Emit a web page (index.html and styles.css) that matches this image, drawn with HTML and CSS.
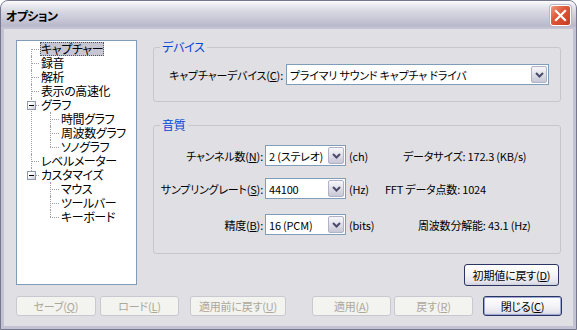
FILE: index.html
```html
<!DOCTYPE html>
<html lang="ja">
<head>
  <meta charset="UTF-8">
  <title>オプション</title>
  <link rel="stylesheet" href="styles.css">
</head>
<body>
  <div class="window">
    <div class="titlebar">
      <span class="title">オプション</span>
      <span class="close">
        <svg width="13" height="13" viewBox="0 0 13 13">
          <path d="M2 2 L11 11 M11 2 L2 11" stroke="#fff" stroke-width="2.2" stroke-linecap="square"/>
        </svg>
      </span>
    </div>

    <div class="client">
      <div class="main">
        <div class="tree">
          <ul class="root">
            <li><span class="node selected">キャプチャー</span></li>
            <li><span class="node">録音</span></li>
            <li><span class="node">解析</span></li>
            <li><span class="node">表示の高速化</span></li>
            <li>
              <span class="toggle"></span><span class="node">グラフ</span>
              <ul>
                <li><span class="node">時間グラフ</span></li>
                <li><span class="node">周波数グラフ</span></li>
                <li><span class="node">ソノグラフ</span></li>
              </ul>
            </li>
            <li><span class="node">レベルメーター</span></li>
            <li>
              <span class="toggle"></span><span class="node">カスタマイズ</span>
              <ul>
                <li><span class="node">マウス</span></li>
                <li><span class="node">ツールバー</span></li>
                <li><span class="node">キーボード</span></li>
              </ul>
            </li>
          </ul>
        </div>

        <div class="panel">
          <fieldset class="group device">
            <legend>デバイス</legend>
            <div class="device-row">
              <span class="caption">キャプチャーデバイス(<u>C</u>):</span>
              <div class="combo wide">
                <span class="value">プライマリ サウンド キャプチャ ドライバ</span>
                <span class="drop"><svg width="9" height="6" viewBox="0 0 9 6"><path d="M1 1 L4.5 4.5 L8 1" fill="none" stroke="#4a4c6a" stroke-width="2"/></svg></span>
              </div>
            </div>
          </fieldset>

          <fieldset class="group quality">
            <legend>音質</legend>
            <div class="qrow first">
              <span class="caption">チャンネル数(<u>N</u>):</span>
              <div class="combo small">
                <span class="value">2 (ステレオ)</span>
                <span class="drop"><svg width="9" height="6" viewBox="0 0 9 6"><path d="M1 1 L4.5 4.5 L8 1" fill="none" stroke="#4a4c6a" stroke-width="2"/></svg></span>
              </div>
              <span class="unit">(ch)</span>
              <span class="info size">データサイズ: 172.3 (KB/s)</span>
            </div>
            <div class="qrow second">
              <span class="caption">サンプリングレート(<u>S</u>):</span>
              <div class="combo small">
                <span class="value">44100</span>
                <span class="drop"><svg width="9" height="6" viewBox="0 0 9 6"><path d="M1 1 L4.5 4.5 L8 1" fill="none" stroke="#4a4c6a" stroke-width="2"/></svg></span>
              </div>
              <span class="unit">(Hz)</span>
              <span class="info fft">FFT データ点数: 1024</span>
            </div>
            <div class="qrow third">
              <span class="caption">精度(<u>B</u>):</span>
              <div class="combo small">
                <span class="value">16 (PCM)</span>
                <span class="drop"><svg width="9" height="6" viewBox="0 0 9 6"><path d="M1 1 L4.5 4.5 L8 1" fill="none" stroke="#4a4c6a" stroke-width="2"/></svg></span>
              </div>
              <span class="unit">(bits)</span>
              <span class="info res">周波数分解能: 43.1 (Hz)</span>
            </div>
          </fieldset>

          <div class="reset-row">
            <button class="btn reset">初期値に戻す(<u>D</u>)</button>
          </div>
        </div>
      </div>

      <div class="actions">
        <button class="btn disabled save">セーブ(<u>Q</u>)</button>
        <button class="btn disabled load">ロード(<u>L</u>)</button>
        <button class="btn disabled revert">適用前に戻す(<u>U</u>)</button>
        <button class="btn disabled apply">適用(<u>A</u>)</button>
        <button class="btn disabled undo">戻す(<u>R</u>)</button>
        <button class="btn default closebtn">閉じる(<u>C</u>)</button>
      </div>
    </div>
  </div>
</body>
</html>
```

FILE: styles.css
```css
body {
  margin: 0;
  padding: 0;
  background: #ffffff;
  font-family: "Noto Sans CJK JP", "Liberation Sans", sans-serif;
  font-size: 11px;
  letter-spacing: -0.2px;
  font-feature-settings: "palt";
  color: #000000;
}

.window {
  width: 577px;
  height: 330px;
  box-sizing: border-box;
  display: flex;
  flex-direction: column;
  background: #c3c2d2;
  border: 1px solid #77768f;
  border-radius: 8px 8px 0 0;
  overflow: hidden;
}

/* title bar */
.titlebar {
  height: 28px;
  flex: none;
  display: flex;
  align-items: center;
  justify-content: space-between;
  padding: 0 5px 0 5px;
  background: linear-gradient(#fdfdfe 0%, #ebebf1 14%, #d6d6e1 40%, #c5c4d4 70%, #bab9cb 88%, #c9c8d7 100%);
}

.title {
  font-weight: bold;
  font-size: 12px;
  letter-spacing: -0.6px;
  margin-top: 1px;
}

.close {
  width: 19px;
  height: 19px;
  margin-top: 1px;
  display: flex;
  align-items: center;
  justify-content: center;
  border: 1px solid #ffffff;
  border-radius: 3px;
  background: linear-gradient(135deg, #ef9c83 0%, #e0593a 40%, #c8391c 100%);
  box-shadow: 0 0 0 1px #b8b7c8;
}

/* client area */
.client {
  flex: 1;
  margin: 0 3px 3px 3px;
  background: #e0dfe3;
  padding: 11px 0 0 12px;
  display: flex;
  flex-direction: column;
}

.main {
  display: flex;
  align-items: flex-start;
}

/* tree view */
.tree {
  width: 121px;
  height: 245px;
  box-sizing: border-box;
  border: 1px solid #7f9db9;
  background: #ffffff;
  padding-top: 1px;
  flex: none;
  font-size: 12px;
  letter-spacing: -0.4px;
  line-height: 14px;
}

.tree ul {
  list-style: none;
  margin: 0;
  padding: 0;
}

.tree li {
  position: relative;
  padding-left: 23px;
}

.tree li::before {
  content: "";
  position: absolute;
  left: 14px;
  top: 7px;
  width: 8px;
  border-top: 1px dotted #a0a0a0;
}

.tree li::after {
  content: "";
  position: absolute;
  left: 14px;
  top: 0;
  bottom: 0;
  border-left: 1px dotted #a0a0a0;
}

.tree .root > li:first-child::after {
  top: 7px;
}

.tree li:last-child::after {
  bottom: auto;
  height: 7px;
}

.tree ul ul li {
  padding-left: 20px;
}

.tree ul ul li::before,
.tree ul ul li::after {
  left: 10px;
}

.tree ul ul li::before {
  width: 9px;
}

.node {
  display: inline-block;
  vertical-align: top;
  height: 14px;
  line-height: 14px;
  padding: 0 1px;
  white-space: nowrap;
}

.node.selected {
  background: #c6c5d2;
  outline: 1px dotted #555555;
  outline-offset: -1px;
}

.toggle {
  position: absolute;
  left: 10px;
  top: 3px;
  width: 9px;
  height: 9px;
  box-sizing: border-box;
  border: 1px solid #8e9aab;
  background: linear-gradient(135deg, #ffffff 30%, #c9cad6 100%);
  z-index: 1;
}

.toggle::after {
  content: "";
  position: absolute;
  left: 1px;
  top: 3px;
  width: 5px;
  height: 1px;
  background: #000000;
}

/* right panel */
.panel {
  width: 408px;
  margin-left: 16px;
  display: flex;
  flex-direction: column;
}

.group {
  margin: 0;
  border: 1px solid #c6c6cd;
  border-radius: 3px;
  min-width: 0;
}

.group legend {
  color: #0046d5;
  font-size: 12px;
  margin-left: 6px;
  padding: 0 2px;
  line-height: 14px;
  height: 14px;
}

.device {
  padding: 10px 11px 16px 0;
}

.device-row {
  display: flex;
  align-items: center;
  justify-content: flex-end;
}

.caption {
  white-space: nowrap;
}

/* combo boxes */
.combo {
  height: 21px;
  box-sizing: border-box;
  border: 1px solid #7f9db9;
  background: #ffffff;
  display: flex;
  align-items: center;
  padding: 0 1px 0 3px;
  flex: none;
}

.combo .value {
  flex: 1;
  white-space: nowrap;
  overflow: hidden;
}

.combo.wide {
  width: 263px;
  margin-left: 3px;
}

.combo.small {
  width: 81px;
  margin-left: 2px;
}

.drop {
  width: 16px;
  height: 17px;
  flex: none;
  box-sizing: border-box;
  border: 1px solid #b2b2c6;
  border-radius: 2px;
  background: linear-gradient(#f7f7fa, #d6d6e2 70%, #c6c6d5);
  display: flex;
  align-items: center;
  justify-content: center;
}

.quality {
  margin-top: 16px;
  padding: 13px 0 18px 0;
}

.qrow {
  display: flex;
  align-items: center;
}

.qrow.second {
  margin-top: 12px;
}

.qrow.third {
  margin-top: 15px;
}

.qrow .caption {
  width: 109px;
  text-align: right;
  flex: none;
}

.unit {
  width: 36px;
  margin-left: 3px;
  flex: none;
  white-space: nowrap;
}

.info {
  white-space: nowrap;
}

.info.size {
  margin-left: 18px;
}

.info.res {
  margin-left: 33px;
}

.reset-row {
  display: flex;
  justify-content: flex-end;
  margin-top: 10px;
  padding-right: 2px;
}

/* buttons */
.btn {
  height: 22px;
  padding: 0;
  font-family: inherit;
  font-size: 11px;
  letter-spacing: -0.2px;
  font-feature-settings: "palt";
  color: #000000;
  border: 1px solid #2b3563;
  border-radius: 3px;
  background: linear-gradient(#ffffff 0%, #f4f4f7 50%, #e4e4ec 85%, #cfd0dd 100%);
  white-space: nowrap;
}

.btn.reset {
  width: 95px;
}

.btn.disabled {
  color: #aca899;
  border-color: #c9c8d0;
  background: #f3f3f0;
}

.btn.default {
  box-shadow: inset 0 0 0 1px #9ca9d8;
}

.actions {
  display: flex;
  margin-top: 10px;
}

.actions .btn {
  width: 79px;
  height: 20px;
}

.actions .save {
  width: 80px;
}

.actions .load {
  margin-left: 4px;
}

.actions .revert {
  width: 96px;
  margin-left: 11px;
}

.actions .apply {
  margin-left: 26px;
}

.actions .undo {
  margin-left: 3px;
}

.actions .closebtn {
  margin-left: 10px;
}
```
